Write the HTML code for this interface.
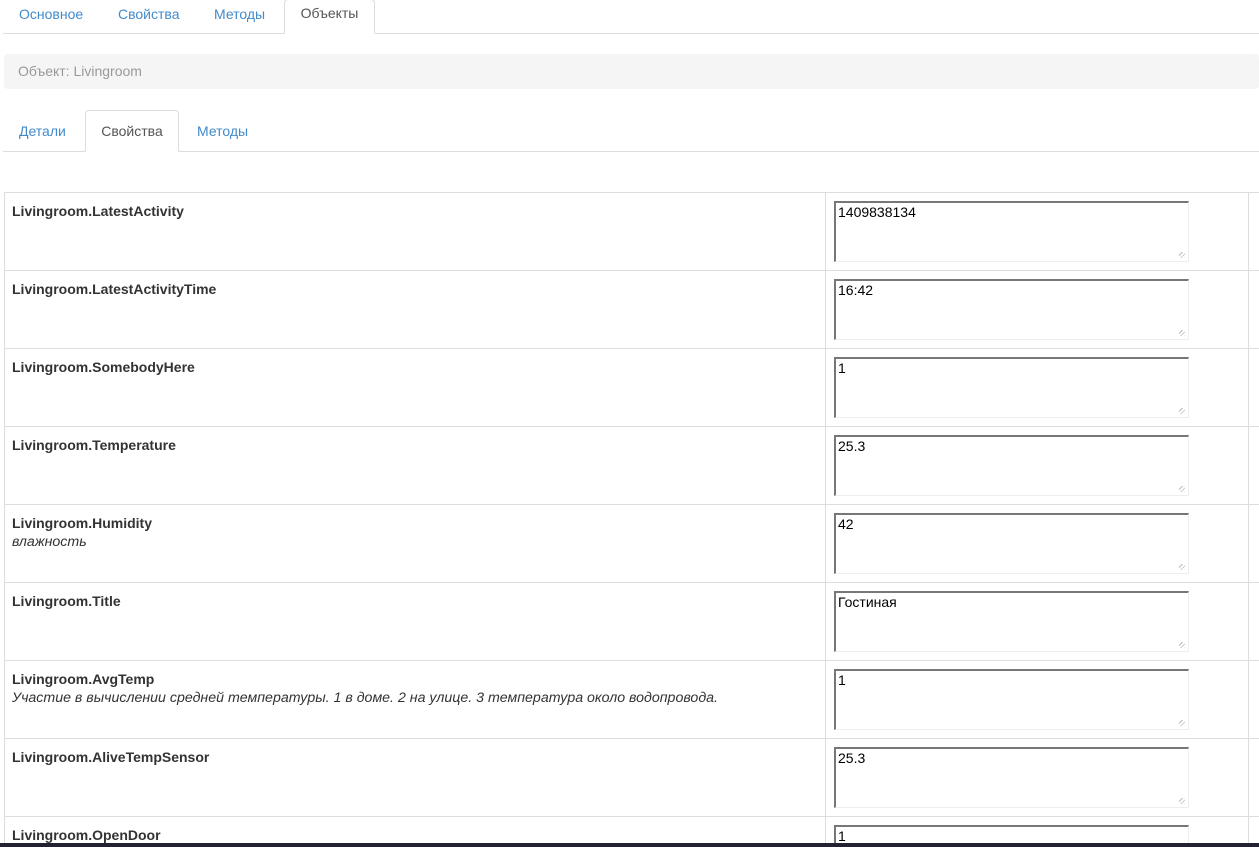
<!DOCTYPE html>
<html><head><meta charset="utf-8"><style>
html{height:847px;overflow:hidden}
body{margin:0;width:1259px;height:847px;overflow:hidden;background:#fff;font-family:"Liberation Sans",Arial,sans-serif;font-size:14px;color:#333;position:relative}
.tabs{position:absolute;left:3px;right:0;border-bottom:1px solid #ddd}
.tab{position:absolute;top:0;padding:0;color:#428bca;font-size:14px}
.tab.act{color:#555;border:1px solid #ddd;border-bottom:1px solid #fff;background:#fff;border-radius:4px 4px 0 0}
.panel{position:absolute;left:4px;right:0;top:54px;height:35px;background:#f5f5f5;border-radius:4px;color:#999;font-size:14px;line-height:35px;padding-left:14px}
table{position:absolute;left:4px;top:192px;border-collapse:collapse;width:1255px}
td{border:1px solid #ddd;height:77px;vertical-align:top;padding:0}
td.l{width:821px;padding:10px 0 0 7px;box-sizing:border-box}
td.l b{font-size:14px;color:#333}
td.l i{display:block;font-size:14.2px;margin-top:3px;color:#333}
td.r{width:422px}
td.x{border-right:none}
.ta{margin:8px 0 0 8px;width:355px;height:61px;box-sizing:border-box;border-top:2px solid #777;border-left:2px solid #777;border-right:1px solid #eee;border-bottom:1px solid #eee;font-size:14px;color:#000;padding:1px 0 0 2px;position:relative}
.ta:after{content:"";position:absolute;right:3px;bottom:3px;width:6px;height:6px;background:repeating-linear-gradient(135deg,transparent 0 2px,#bbb 2px 3px)}
tr.last td{height:25px;border-bottom:none}
tr.last .ta{height:18px;border-bottom:none;overflow:hidden}
tr.last .ta:after{display:none}
.bar{position:absolute;left:0;right:0;top:843px;height:4px;background:#223}
</style></head><body>
<div class="tabs" style="top:0;height:33px">
<div class="tab" style="left:16px;top:6px">Основное</div>
<div class="tab" style="left:115px;top:6px">Свойства</div>
<div class="tab" style="left:211px;top:6px">Методы</div>
<div class="tab act" style="left:281px;top:-1px;width:89px;height:33px;line-height:27px;text-align:center">Объекты</div>
</div>
<div class="panel">Объект: Livingroom</div>
<div class="tabs" style="top:110px;height:41px">
<div class="tab" style="left:16px;top:13px">Детали</div>
<div class="tab act" style="left:82px;top:0;width:92px;height:40px;line-height:40px;text-align:center">Свойства</div>
<div class="tab" style="left:194px;top:13px">Методы</div>
</div>
<table>
<tr><td class="l"><b>Livingroom.LatestActivity</b></td><td class="r"><div class="ta">1409838134</div></td><td class="x"></td></tr>
<tr><td class="l"><b>Livingroom.LatestActivityTime</b></td><td class="r"><div class="ta">16:42</div></td><td class="x"></td></tr>
<tr><td class="l"><b>Livingroom.SomebodyHere</b></td><td class="r"><div class="ta">1</div></td><td class="x"></td></tr>
<tr><td class="l"><b>Livingroom.Temperature</b></td><td class="r"><div class="ta">25.3</div></td><td class="x"></td></tr>
<tr><td class="l"><b>Livingroom.Humidity</b><i>влажность</i></td><td class="r"><div class="ta">42</div></td><td class="x"></td></tr>
<tr><td class="l"><b>Livingroom.Title</b></td><td class="r"><div class="ta">Гостиная</div></td><td class="x"></td></tr>
<tr><td class="l"><b>Livingroom.AvgTemp</b><i>Участие в вычислении средней температуры. 1 в доме. 2 на улице. 3 температура около водопровода.</i></td><td class="r"><div class="ta">1</div></td><td class="x"></td></tr>
<tr><td class="l"><b>Livingroom.AliveTempSensor</b></td><td class="r"><div class="ta">25.3</div></td><td class="x"></td></tr>
<tr class="last"><td class="l"><b>Livingroom.OpenDoor</b></td><td class="r"><div class="ta">1</div></td><td class="x"></td></tr>
</table>
<div class="bar"></div>
</body></html>
